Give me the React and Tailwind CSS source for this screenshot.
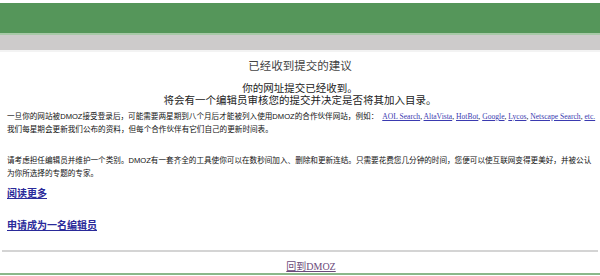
export default function App() {
  const cjk = { fontFamily: '"Liberation Sans", "Noto Sans CJK SC", sans-serif' };
  const serif = { fontFamily: '"Liberation Serif", "Noto Sans CJK SC", serif' };
  const links = ["AOL Search", "AltaVista", "HotBot", "Google", "Lycos", "Netscape Search", "etc."];
  return (
    <div className="w-[600px] h-[276px] overflow-hidden bg-white flex flex-col *:shrink-0" style={cjk}>
      <div className="h-[3px] bg-white" />
      <div className="h-[30px] bg-[#55965a]" />
      <div className="h-[2px] bg-[#a8c9a8]" />
      <div className="h-[15px] bg-[#cdcbcb]" />
      <div className="h-[2px] bg-[#f3f3f3]" />
      <div className="mt-[7px] text-center text-[11.5px] leading-[14px] text-[#444]">已经收到提交的建议</div>
      <div className="mt-[9px] text-center text-[10.5px] leading-[12px] text-[#222]">
        <div>你的网址提交已经收到。</div>
        <div>将会有一个编辑员审核您的提交并决定是否将其加入目录。</div>
      </div>
      <div className="mt-[4px] px-[7px] text-[7.6px] leading-[13px] text-[#111]">
        <div className="whitespace-nowrap">
          一旦你的网站被DMOZ接受登录后，可能需要两星期到八个月后才能被列入使用DMOZ的合作伙伴网站，例如：
          <span className="ml-[4px]" style={serif}>
            {links.map((l, i) => (
              <span key={l}>
                <a href="#" className="underline text-[#3a3ab0]">{l}</a>
                {i < links.length - 1 ? ", " : ""}
              </span>
            ))}
          </span>
        </div>
        <div>我们每星期会更新我们公布的资料，但每个合作伙伴有它们自己的更新时间表。</div>
      </div>
      <div className="mt-[19px] px-[7px] text-[7.6px] leading-[12.5px] text-[#111]">
        请考虑担任编辑员并维护一个类别。DMOZ有一套齐全的工具使你可以在数秒间加入、删除和更新连结。只需要花费您几分钟的时间，您便可以使互联网变得更美好，并被公认为你所选择的专题的专家。
      </div>
      <div className="mt-[7px] px-[7px] text-[10px] leading-[14px] font-bold">
        <a href="#" className="underline text-[#2a2a9a]">阅读更多</a>
      </div>
      <div className="mt-[18px] px-[7px] text-[10px] leading-[14px] font-bold">
        <a href="#" className="underline text-[#2a2a9a]">申请成为一名编辑员</a>
      </div>
      <div className="mt-[17px] mx-[2px] h-[2px] bg-[#d4d4d4]" />
      <div className="mt-[9px] text-center text-[10px] leading-[12px] pl-[22px]">
        <a href="#" className="underline text-[#6a4a7a]" style={serif}>回到DMOZ</a>
      </div>
      <div className="h-[2px] bg-[#8ab88a]" />
    </div>
  );
}
